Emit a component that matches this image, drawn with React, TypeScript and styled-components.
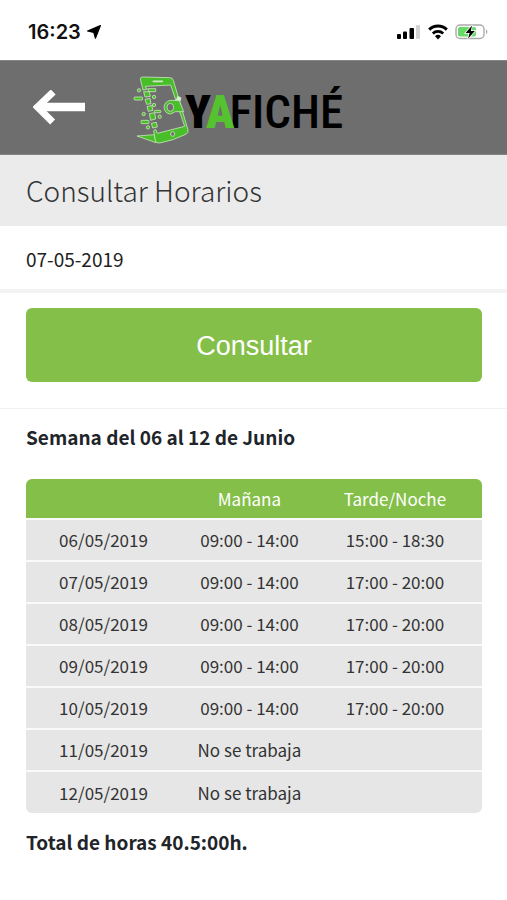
import React from "react";
import styled, { createGlobalStyle } from "styled-components";

const GlobalStyle = createGlobalStyle`
  * { box-sizing: border-box; }
  body {
    margin: 0;
    background: #fff;
    color: #212529;
    font-family: "Noto Sans CJK SC", "Noto Sans", sans-serif;
  }
`;

const StatusBar = styled.div`
  display: flex;
  align-items: center;
  justify-content: space-between;
  height: 60px;
  padding: 4px 18px 0 28px;
  background: #fff;
`;

const StatusGroup = styled.div<{ $gap: number }>`
  display: flex;
  align-items: center;
  gap: ${({ $gap }) => $gap}px;
`;

const Clock = styled.time`
  font: 600 20px/24px Inter, sans-serif;
  color: #111;
`;

const Header = styled.header`
  display: flex;
  align-items: center;
  gap: 48px;
  height: 95px;
  padding: 0 33px;
  background: #6e6e6e;
  border-top: 1px solid #858585;
  border-bottom: 1px solid #858585;
`;

const BackButton = styled.button`
  display: flex;
  padding: 0;
  border: 0;
  background: none;
  cursor: pointer;
`;

const Logo = styled.div`
  display: flex;
  align-items: center;
  padding-top: 6px;
`;

const Wordmark = styled.div`
  display: flex;
  margin-left: -5px;
  padding-top: 2px;
  font: 500 47px/60px "Roboto Condensed", "Roboto", sans-serif;
  color: #000;
`;

const WordPart = styled.span<{ $accent?: boolean }>`
  position: relative;
  z-index: ${({ $accent }) => ($accent ? 1 : 0)};
  margin-right: -5px;
  font-weight: 900;
  color: ${({ $accent }) => ($accent ? "#55c22f" : "#000")};
`;

const TitleBar = styled.div`
  padding: 14px 26px 15px;
  background: #ebebeb;
`;

const Title = styled.h1`
  margin: 0;
  font-size: 28px;
  line-height: 42px;
  font-weight: 300;
  color: #333;
`;

const DateInput = styled.input`
  display: block;
  width: 100%;
  height: 67px;
  padding: 2px 26px 0;
  border: 0;
  border-bottom: 4px solid #f3f3f3;
  border-radius: 0;
  background: #fff;
  color: #222;
  font-family: inherit;
  font-size: 19px;
`;

const FormActions = styled.div`
  padding: 15px 25px 26px 26px;
  border-bottom: 1px solid #f2f2f2;
`;

const SubmitButton = styled.button`
  width: 100%;
  height: 74px;
  padding: 3px 0 0;
  border: 0;
  border-radius: 6px;
  background: #84bf49;
  color: #fff;
  font-family: "Liberation Sans", Arial, sans-serif;
  font-size: 27px;
  cursor: pointer;
`;

const Results = styled.section`
  padding: 13px 25px 14px 26px;
`;

const Summary = styled.p`
  margin: 0;
  font-size: 19px;
  line-height: 30px;
  font-weight: 700;
`;

const TableFrame = styled.div`
  margin: 27px 0 14px;
  border-radius: 6px;
  overflow: hidden;
`;

const Table = styled.table`
  width: 100%;
  border-collapse: collapse;
  table-layout: fixed;
  font-size: 17px;
  line-height: 24px;
  text-align: center;
`;

const HeadCell = styled.th<{ $share: number }>`
  width: ${({ $share }) => $share}%;
  height: 40px;
  padding: 1px 0 0;
  background: #84bf49;
  color: #fff;
  font-weight: 400;

  &:last-child {
    padding-right: 10px;
  }
`;

const Cell = styled.td`
  height: 42px;
  padding: 0;
  border-top: 2px solid #fafafa;
  background: #e6e6e6;
  color: #333;

  &:last-child {
    padding-right: 10px;
  }
`;

const DayCell = styled(Cell).attrs({ as: "th", scope: "row" })`
  font-weight: 400;
`;

const days = [
  { day: "06/05/2019", morning: "09:00 - 14:00", evening: "15:00 - 18:30" },
  { day: "07/05/2019", morning: "09:00 - 14:00", evening: "17:00 - 20:00" },
  { day: "08/05/2019", morning: "09:00 - 14:00", evening: "17:00 - 20:00" },
  { day: "09/05/2019", morning: "09:00 - 14:00", evening: "17:00 - 20:00" },
  { day: "10/05/2019", morning: "09:00 - 14:00", evening: "17:00 - 20:00" },
  { day: "11/05/2019", morning: "No se trabaja", evening: "" },
  { day: "12/05/2019", morning: "No se trabaja", evening: "" },
];

const LocationIcon = () => (
  <svg width="14" height="14" viewBox="0 0 14 14" aria-hidden="true">
    <path d="M13.4.6 8.4 13.2 6.8 7.4.6 6Z" fill="#000" stroke="#000" strokeWidth="1.2" strokeLinejoin="round" />
  </svg>
);

const SignalIcon = () => (
  <svg width="24" height="16" viewBox="0 0 24 16" aria-hidden="true">
    <rect x="0" y="10" width="4" height="5" rx="1" />
    <rect x="6" y="7.5" width="4" height="7.5" rx="1" />
    <rect x="12.5" y="4" width="4.5" height="11" rx="1" />
    <rect x="19" y="1" width="4" height="14" rx="1" fill="#d2d2d2" />
  </svg>
);

const WifiIcon = () => (
  <svg width="20" height="16" viewBox="0 0 20 16" fill="none" stroke="#000" aria-hidden="true">
    <path d="M1.2 5.6a12.6 12.6 0 0 1 17.6 0" strokeWidth="3" />
    <path d="M4.8 9.5a7.5 7.5 0 0 1 10.4 0" strokeWidth="2.6" />
    <path d="M10 15.4 7 12.3a4.3 4.3 0 0 1 6 0Z" fill="#000" stroke="none" />
  </svg>
);

const BatteryIcon = () => (
  <svg width="34" height="18" viewBox="0 0 34 18" aria-hidden="true">
    <rect x="1" y="2" width="28" height="13.5" rx="4" fill="#fff" stroke="#ababab" strokeWidth="1.4" />
    <rect x="3" y="4" width="18" height="9.5" rx="2" fill="#67d967" />
    <path d="M31 6.2v5a3 3 0 0 0 0-5Z" fill="#ababab" />
    <path d="M17 2.4 10.6 10h4l-1.6 5.8L19.8 8h-4Z" fill="#000" stroke="#fff" strokeWidth="1.6" paintOrder="stroke" />
  </svg>
);

const ArrowIcon = () => (
  <svg width="52" height="36" viewBox="0 0 52 36" fill="none" stroke="#fff" aria-hidden="true">
    <path d="M52 17H8" strokeWidth="8.4" />
    <path d="M20.2 2 4.5 17 19.6 32" strokeWidth="7" />
  </svg>
);

const WalletIcon = () => (
  <svg width="57" height="69" viewBox="24 36 171 207" aria-hidden="true">
    <g fill="#48be28" stroke="#c9e3bd" strokeWidth="2.5" strokeLinejoin="round">
      <path d="M36 216 88 212 93 236Z" />
      <path
        fillRule="evenodd"
        d="M46 45Q46 39 53 39L134 41Q143 41 145 49L189 198Q191 206 184 210Q145 230 104 237Q93 239 91 229L86 200 92 196 97 208 179 187 137 63 61 67 65 76 54 78Z"
      />
      <path d="M158 97 168 101 166 111 154 108Z" fill="#dcefd3" />
      <path d="M176 143 163 110 136 109Q118 113 117 130Q119 149 137 150L151 143Z" />
      <ellipse cx="136" cy="130" rx="10" ry="12" fill="#6e6e6e" />
      <ellipse cx="143" cy="210" rx="6" ry="7" fill="#6e6e6e" />
      <path d="M68 74H92V83H71Z" />
      <path d="M56 83H73L76 97 60 99Z" />
      <path d="M60 106 75 103 78 119 65 121Z" />
      <path d="M66 128 80 124 84 139 70 142Z" />
      <path d="M73 149 89 146 92 165 77 169Z" />
      <path d="M79 178 94 175 97 189 83 192Z" />
      <rect x="27" y="99" width="26" height="9" rx="3" />
      <rect x="48" y="169" width="24" height="10" rx="3" />
      <rect x="88" y="139" width="20" height="7" rx="3" />
    </g>
    <g fill="#48be28" stroke="#c9e3bd" strokeWidth="2.5">
      <circle cx="42" cy="79" r="5" />
      <circle cx="87" cy="99" r="5" />
      <circle cx="87" cy="123" r="5" />
      <circle cx="56" cy="150" r="5" />
      <circle cx="104" cy="158" r="5" />
      <circle cx="69" cy="190" r="5" />
    </g>
    <path d="M85 52H112" stroke="#d3e8c9" strokeWidth="5" strokeLinecap="round" />
  </svg>
);

export default function App() {
  return (
    <>
      <GlobalStyle />
      <StatusBar>
        <StatusGroup $gap={6}>
          <Clock>16:23</Clock>
          <LocationIcon />
        </StatusGroup>
        <StatusGroup $gap={7}>
          <SignalIcon />
          <WifiIcon />
          <BatteryIcon />
        </StatusGroup>
      </StatusBar>
      <Header>
        <BackButton type="button" aria-label="Volver">
          <ArrowIcon />
        </BackButton>
        <Logo>
          <WalletIcon />
          <Wordmark>
            <WordPart>Y</WordPart>
            <WordPart $accent>A</WordPart>
            FICHÉ
          </Wordmark>
        </Logo>
      </Header>
      <main>
        <TitleBar>
          <Title>Consultar Horarios</Title>
        </TitleBar>
        <form onSubmit={(event) => event.preventDefault()}>
          <DateInput type="text" aria-label="Fecha" defaultValue="07-05-2019" />
          <FormActions>
            <SubmitButton type="submit">Consultar</SubmitButton>
          </FormActions>
        </form>
        <Results>
          <Summary>Semana del 06 al 12 de Junio</Summary>
          <TableFrame>
            <Table>
              <thead>
                <tr>
                  <HeadCell $share={34} scope="col" aria-label="Día" />
                  <HeadCell $share={30} scope="col">Mañana</HeadCell>
                  <HeadCell $share={36} scope="col">Tarde/Noche</HeadCell>
                </tr>
              </thead>
              <tbody>
                {days.map(({ day, morning, evening }) => (
                  <tr key={day}>
                    <DayCell>{day}</DayCell>
                    <Cell>{morning}</Cell>
                    <Cell>{evening}</Cell>
                  </tr>
                ))}
              </tbody>
            </Table>
          </TableFrame>
          <Summary>Total de horas 40.5:00h.</Summary>
        </Results>
      </main>
    </>
  );
}
